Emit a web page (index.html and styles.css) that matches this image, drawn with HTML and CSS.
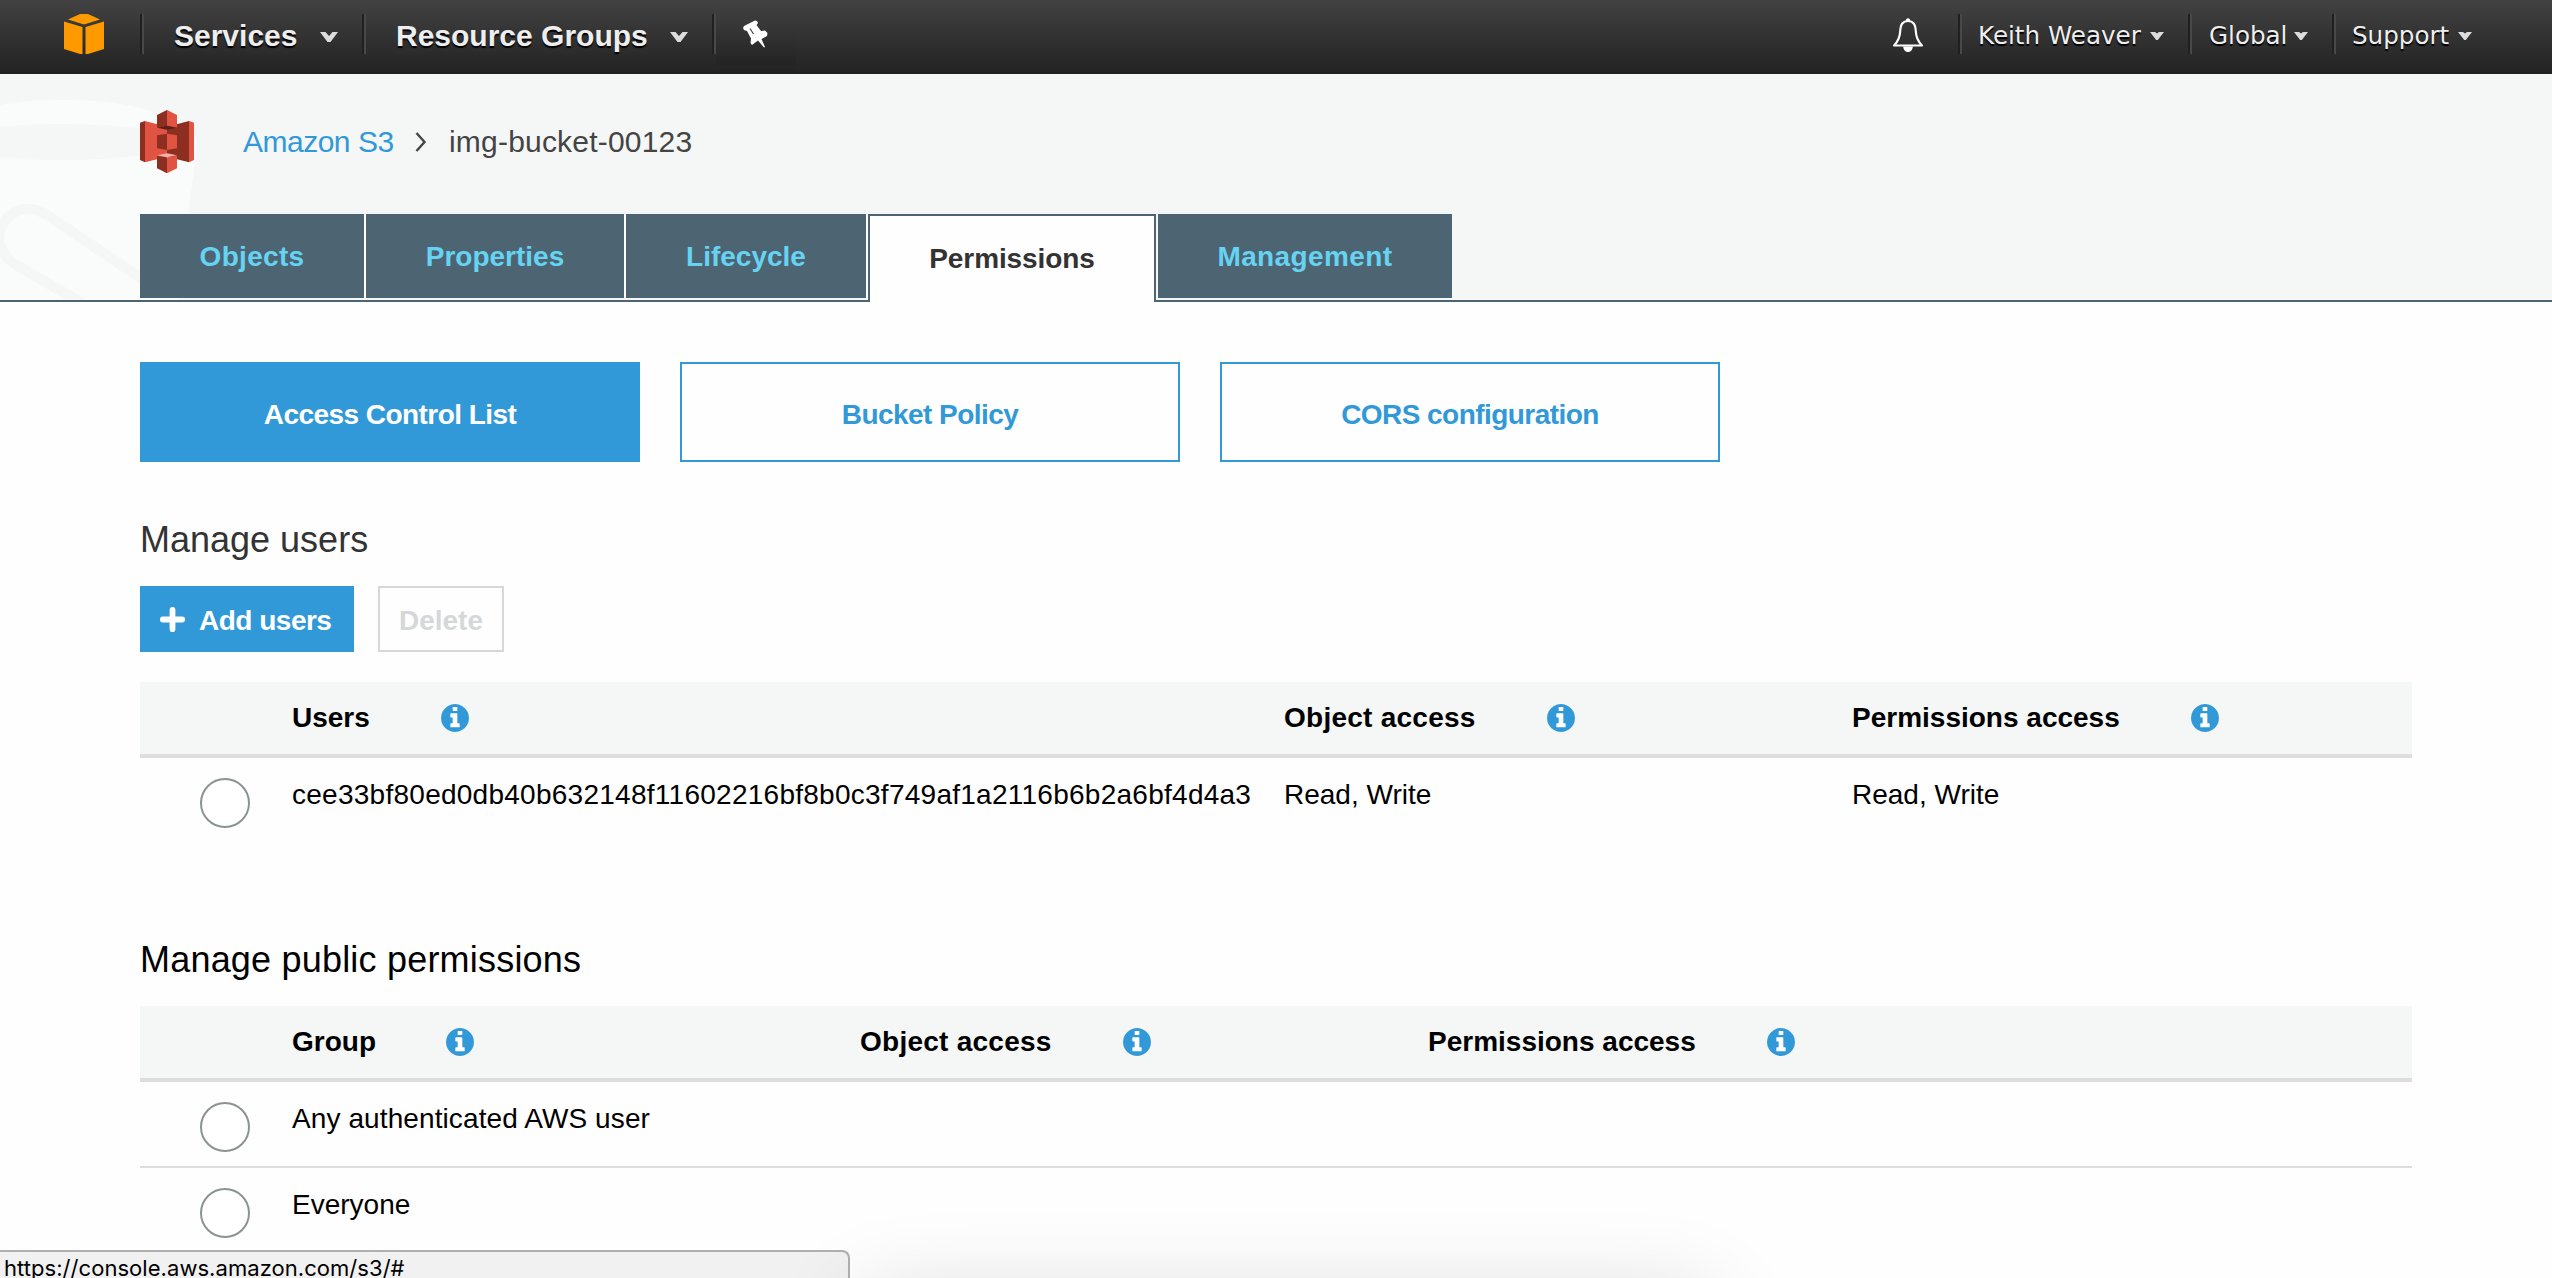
FILE: index.html
```
<!DOCTYPE html>
<html lang="en">
<head>
<meta charset="utf-8">
<title>S3 Management Console</title>
<link rel="stylesheet" href="styles.css">
</head>
<body>
<svg class="defs" width="0" height="0">
  <symbol id="info" viewBox="128 128 1536 1536"><circle cx="896" cy="896" r="600" fill="#fff"/><path d="M1152 1376v-160q0-14-9-23t-23-9h-96v-512q0-14-9-23t-23-9h-320q-14 0-23 9t-9 23v160q0 14 9 23t23 9h96v320h-96q-14 0-23 9t-9 23v160q0 14 9 23t23 9h448q14 0 23-9t9-23zm-128-896v-160q0-14-9-23t-23-9h-192q-14 0-23 9t-9 23v160q0 14 9 23t23 9h192q14 0 23-9t9-23zm640 416q0 209-103 385.5t-279.5 279.5-385.5 103-385.5-103-279.5-279.5-103-385.5 103-385.5 279.5-279.5 385.5-103 385.5 103 279.5 279.5 103 385.5z" fill="#3199d8"/></symbol>
  <symbol id="chevron" viewBox="0 0 18 10"><path d="M0 0h5.500L9 4l3.500-4H18L10.500 10h-3z" fill="#dcdcdc"/></symbol>
  <symbol id="caret" viewBox="0 0 14 8"><path d="M0 0h5l2 1.500L9 0h5L7.800 8H6.200z" fill="#dcdcdc"/></symbol>
</svg>

<nav class="nav">
  <svg class="cube" width="40" height="40" viewBox="0 0 40 40" fill="#ff9900"><path d="M4 5.500L16 0h8l12 5.500L20 10.500z"/><path d="M0 7.500L18.500 13v27H16L0 35z"/><path d="M40 7.500L21.500 13v27H24L40 35z"/></svg>
  <span class="sep"></span>
  <a class="item services">Services<svg width="18" height="10"><use href="#chevron"/></svg></a>
  <span class="sep"></span>
  <a class="item groups">Resource Groups<svg width="18" height="10"><use href="#chevron"/></svg></a>
  <span class="sep"></span>
  <a class="pin"><svg width="25" height="28" viewBox="0 0 25 28"><path d="M1 6L12 .5l2 .5 1 2-1.500 2L18 11l4-.5 2.500 2.500-.5 3-5.500 3L22 27l-1 .5-6-7L9 25l-1.500-2 .5-4.500L4 11l-3-1-1-2z" fill="#fff"/><path d="M7 8.500l3.500 5.500" stroke="#444" stroke-width="1.200"/></svg></a>
  <svg class="bell" width="32" height="34" viewBox="0 0 32 34"><path d="M16 3C9.500 3 8.300 8 8.200 13 8 20 5.500 24 2 27.500h28C26.500 24 24 20 23.800 13 23.700 8 22.500 3 16 3z" fill="none" stroke="#fff" stroke-width="2.200" stroke-linejoin="round"/><path d="M14 3V1.500Q16-1 18 1.500V3zM11 28.500h10Q20 34 16 34T11 28.500z" fill="#fff"/></svg>
  <span class="sep"></span>
  <a class="item small user">Keith Weaver<svg width="14" height="8"><use href="#caret"/></svg></a>
  <span class="sep"></span>
  <a class="item small region">Global<svg width="14" height="8"><use href="#caret"/></svg></a>
  <span class="sep"></span>
  <a class="item small support">Support<svg width="14" height="8"><use href="#caret"/></svg></a>
</nav>

<header class="panel">
  <svg class="watermark" width="210" height="226" viewBox="0 0 210 226">
    <path d="M-71 70a134 44 0 0 1 268 0L178 226H-60z" fill="#fafcfc"/>
    <ellipse cx="63" cy="68" rx="117" ry="18" fill="#f4f7f6"/>
    <path d="M160 217L47 141C20 125-1 145-1 163-1 180 10 188 25 196L82 229" fill="none" stroke="#f4f7f6" stroke-width="10.500"/>
  </svg>
  <div class="crumbs">
    <svg class="logo" width="54" height="64" viewBox="0 0 162 192">
      <path d="M0 38l15-5v124l-15-7z" fill="#8c2f20"/><path d="M15 33l66 17v90l-66 17z" fill="#e15343"/>
      <path d="M147 33L81 50v90l66 17z" fill="#8c2f20"/><path d="M147 33l15 5v112l-15 7z" fill="#e15343"/>
      <path d="M51 76l30-5v49l-30-5z" fill="#8c2f20"/><path d="M81 71l30 5v39l-30 5z" fill="#e15343"/>
      <path d="M51 15L81 0v48l-30 5z" fill="#8c2f20"/><path d="M81 0l30 15v38l-30-5z" fill="#e15343"/>
      <path d="M51 53l30-6 30 6-30 6z" fill="#5e1f18"/>
      <path d="M51 137l30 5v48l-30-15z" fill="#8c2f20"/><path d="M81 142l30-5v38l-30 15z" fill="#e15343"/>
      <path d="M51 136l30-6 30 6-30 6z" fill="#f2b0a9"/>
    </svg>
    <a class="root">Amazon S3</a>
    <svg class="angle" width="12" height="20" viewBox="0 0 12 20"><path d="M1.500 1l8 9-8 9" fill="none" stroke="#444" stroke-width="2.400"/></svg>
    <span class="bucket">img-bucket-00123</span>
  </div>
  <div class="tabs">
    <a class="tab objects">Objects</a>
    <a class="tab properties">Properties</a>
    <a class="tab lifecycle">Lifecycle</a>
    <a class="tab permissions">Permissions</a>
    <a class="tab management">Management</a>
  </div>
</header>

<main>
  <div class="sections">
    <a class="section active">Access Control List</a>
    <a class="section">Bucket Policy</a>
    <a class="section">CORS configuration</a>
  </div>

  <h2 class="users-title">Manage users</h2>
  <div class="actions">
    <button class="add"><svg width="25" height="25" viewBox="0 0 25 25"><path d="M12.500 2.800v19.400M2.800 12.500h19.400" stroke="#fff" stroke-width="5.800" stroke-linecap="round"/></svg>Add users</button>
    <button class="delete">Delete</button>
  </div>
  <div class="table users">
    <div class="row head"><span></span>
      <span class="th">Users<svg width="28" height="28"><use href="#info"/></svg></span>
      <span class="th object">Object access<svg width="28" height="28"><use href="#info"/></svg></span>
      <span class="th">Permissions access<svg width="28" height="28"><use href="#info"/></svg></span>
    </div>
    <div class="row"><i class="radio"></i>
      <span class="cell id">cee33bf80ed0db40b632148f11602216bf8b0c3f749af1a2116b6b2a6bf4d4a3</span>
      <span class="cell">Read, Write</span><span class="cell">Read, Write</span>
    </div>
  </div>

  <h2 class="public-title">Manage public permissions</h2>
  <div class="table public">
    <div class="row head"><span></span>
      <span class="th group">Group<svg width="28" height="28"><use href="#info"/></svg></span>
      <span class="th object">Object access<svg width="28" height="28"><use href="#info"/></svg></span>
      <span class="th">Permissions access<svg width="28" height="28"><use href="#info"/></svg></span>
    </div>
    <div class="row"><i class="radio"></i><span class="cell grantee">Any authenticated AWS user</span></div>
    <div class="row"><i class="radio"></i><span class="cell">Everyone</span></div>
  </div>
</main>

<div class="status">https://console.aws.amazon.com/s3/#</div>
<div class="shade"><div class="window-shadow"></div></div>
</body>
</html>
```
FILE: styles.css
```
* { box-sizing: border-box; }
body {
  margin: 0;
  width: 2552px;
  height: 1278px;
  overflow: hidden;
  position: relative;
  background: #fefefe;
  color: #000;
  font: 28px/32px "Liberation Sans", Arial, sans-serif;
}
svg { display: block; flex: none; }
.defs { position: absolute; }

/* top navigation */
.nav {
  display: flex;
  height: 74px;
  padding: 0 56px 0 64px;
  background: linear-gradient(#424242, #222);
  color: #eee;
  font-weight: bold;
  font-size: 30px;
  text-shadow: 0 2px 1px #000;
}
.cube { margin: 14px 36px 0 0; }
.sep {
  flex: none;
  width: 4px;
  height: 40px;
  margin-top: 14px;
  border-left: 2px solid #202020;
  background: #484848;
}
.item {
  display: flex;
  align-items: center;
  justify-content: space-between;
  height: 71px;
  padding: 0 24px 0 30px;
  white-space: nowrap;
}
.item svg { margin-top: 2px; }
.services { width: 218px; }
.groups { width: 346px; }
.pin { width: 80px; height: 65px; padding: 20px 0 0 27px; background: linear-gradient(transparent 40%, rgba(0, 0, 0, .08)); }
.bell { margin: 18px 34px 0 auto; }
.small {
  height: 71px;
  padding-left: 16px;
  font: 24.600px "DejaVu Sans", Verdana, sans-serif;
}
.small svg { margin-top: 0; }
.user { width: 226px; }
.region { width: 140px; padding-left: 17px; }
.support { width: 160px; }

/* bucket header */
.panel {
  position: relative;
  height: 228px;
  padding: 36px 0 0 140px;
  background: #f4f7f6;
  border-bottom: 2px solid #4d6572;
}
.watermark { position: absolute; left: 0; top: 0; }
.crumbs {
  position: relative;
  display: flex;
  align-items: center;
  height: 64px;
  font-size: 30px;
  color: #444;
}
.root { width: 153px; margin: 0 19px 0 49px; color: #3199d8; letter-spacing: -.5px; }
.angle { margin-right: 22px; }
.bucket { letter-spacing: .2px; }
.tabs { position: relative; display: flex; height: 88px; margin-top: 40px; font-weight: bold; }
.tab {
  height: 84px;
  line-height: 85px;
  text-align: center;
  background: #4d6572;
  background-clip: padding-box;
  color: #66d3f2;
}
.objects { width: 226px; border-right: 2px solid #fff; letter-spacing: .3px; }
.properties { width: 260px; border-right: 2px solid #fff; }
.lifecycle { width: 242px; border-right: 2px solid #fff; }
.permissions {
  width: 288px;
  height: 88px;
  line-height: 86px;
  background: #fefefe;
  border: 2px solid #4d6572;
  border-bottom: 0;
  color: #333;
  letter-spacing: -.1px;
}
.management { width: 294px; margin-left: 2px; letter-spacing: .4px; }

/* content */
main { padding: 60px 140px 0; }
.sections { display: flex; gap: 40px; }
.section {
  width: 500px;
  height: 100px;
  padding-top: 2px;
  border: 2px solid #3199d8;
  font-weight: bold;
  line-height: 97px;
  letter-spacing: -.55px;
  text-align: center;
  color: #3199d8;
}
.section.active { background: #3199d8; color: #fff; }
h2 { margin: 0; font-weight: normal; font-size: 36px; line-height: 52px; letter-spacing: .2px; }
.users-title { padding-top: 52px; color: #333; letter-spacing: 0; }
.actions { display: flex; gap: 24px; margin-top: 20px; }
button {
  display: flex;
  align-items: center;
  height: 66px;
  border: 0;
  padding: 3px 0 0;
  font: bold 28px "Liberation Sans", Arial, sans-serif;
}
.add { width: 214px; gap: 14px; padding-left: 20px; background: #3199d8; color: #fff; letter-spacing: -.5px; }
.add svg { margin-top: -3px; }
.delete { width: 126px; justify-content: center; border: 2px solid #d5d8d8; background: #fefefe; color: #d5d8d8; }
.table { margin-top: 30px; }
.row { display: grid; height: 86px; padding-top: 20px; border-bottom: 2px solid #ddd; }
.row:last-child { border-bottom: 0; }
.row.head {
  height: 76px;
  padding: 0;
  align-items: center;
  border-bottom: 4px solid #ddd;
  background: #f4f7f6;
  font-weight: bold;
}
.users .row { grid-template-columns: 152px 992px 568px auto; }
.public .row { grid-template-columns: 152px 568px 568px auto; }
.users { height: 192px; }
.th { display: flex; align-items: center; gap: 71px; line-height: 34px; }
.object { letter-spacing: .25px; }
.group { gap: 70px; }
.cell { padding-top: 1px; }
.id { letter-spacing: .26px; }
.grantee { letter-spacing: .1px; }
.radio { width: 50px; height: 50px; margin-left: 60px; border: 2px solid #8b9294; border-radius: 50%; background: #fff; }
.public-title { padding-top: 60px; }
.public { margin-top: 20px; }

/* browser overlays */
.status {
  position: absolute;
  left: -2px;
  bottom: 0;
  width: 852px;
  height: 28px;
  padding-left: 4px;
  overflow: hidden;
  border: 2px solid #b0b0b0;
  border-bottom: 0;
  border-top-right-radius: 8px;
  background: #f1f1f1;
  font: 22px/33px Inter, sans-serif;
  letter-spacing: .05px;
}
.shade {
  position: absolute;
  left: 740px;
  bottom: 0;
  width: 1100px;
  height: 110px;
  overflow: hidden;
}
.window-shadow {
  width: 850px;
  height: 200px;
  margin: 130px 0 0 120px;
  box-shadow: 0 0 90px rgba(0, 0, 0, .16);
}
```
